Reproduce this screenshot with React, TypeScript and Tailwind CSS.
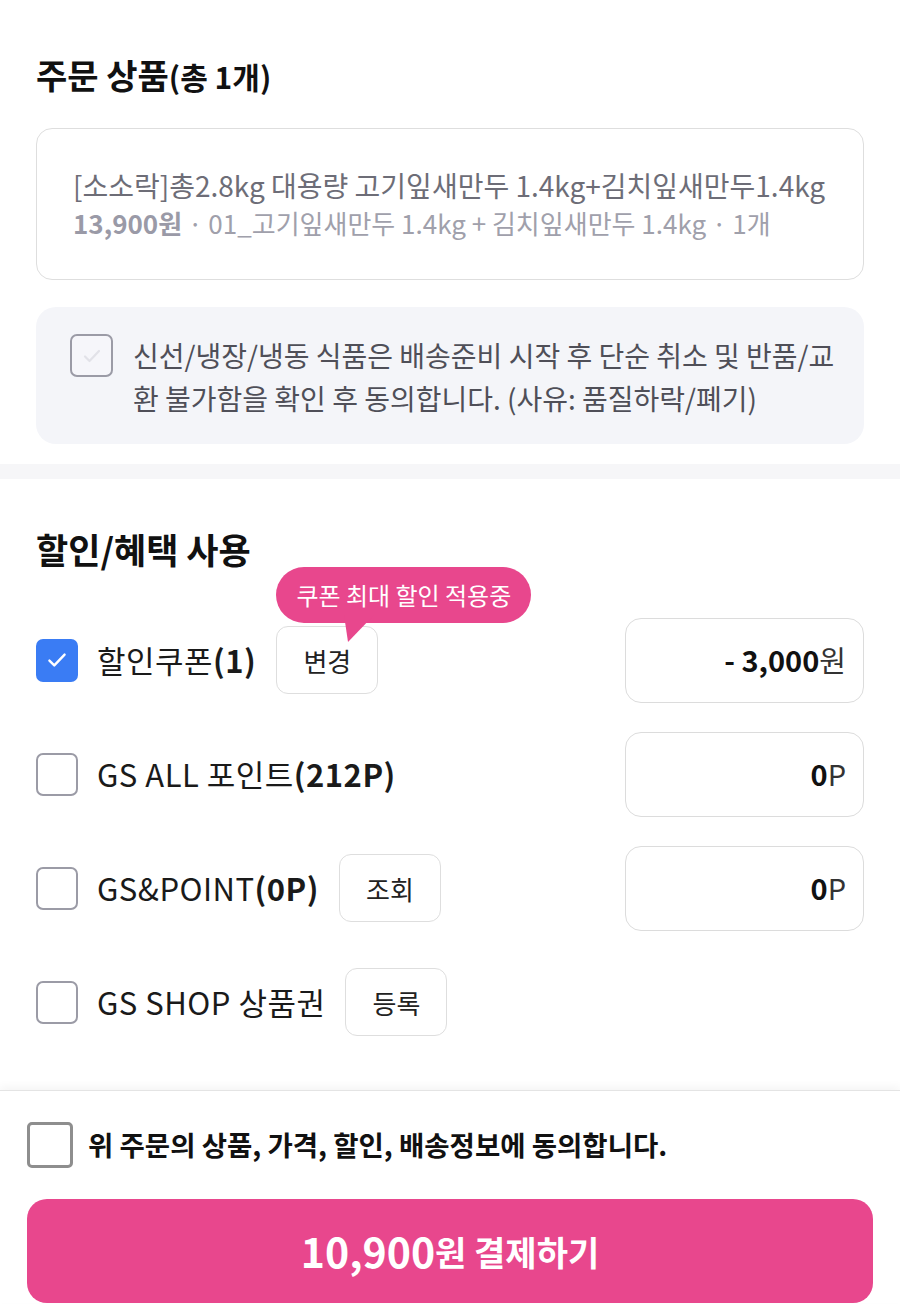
import React from 'react';

const font = 'font-["Noto_Sans_CJK_KR","Noto_Sans",sans-serif]';

function Check({ color = 'white', size = 26 }: { color?: string; size?: number }) {
    return (
        <svg width={size} height={size} viewBox="0 0 24 24" fill="none">
            <path d="M5 12.5l4.5 4.5L19 7" stroke={color} strokeWidth="2.2" strokeLinecap="round" strokeLinejoin="round" />
        </svg>
    );
}

function Box({ checked = false }: { checked?: boolean }) {
    if (checked) {
        return (
            <div className="w-[42px] h-[43px] shrink-0 rounded-[7px] bg-[#3a7cf4] flex items-center justify-center">
                <Check />
            </div>
        );
    }
    return <div className="w-[42px] h-[43px] shrink-0 rounded-[7px] border-[2.5px] border-[#9b9ba6] bg-white" />;
}

function SmallButton({ children }: { children: React.ReactNode }) {
    return (
        <div className="ml-5 w-[102px] h-[68px] shrink-0 rounded-[12px] border border-[#dedede] bg-white flex items-center justify-center text-[26px] text-[#222]">
            {children}
        </div>
    );
}

function Amount({ value, unit }: { value: string; unit: string }) {
    return (
        <div className="w-[239px] h-[85px] rounded-[16px] border border-[#dcdcdc] flex items-center justify-end pr-[17px] text-[29px] text-[#111]">
            <span className="font-bold">{value}</span>
            <span className="text-[#333]">{unit}</span>
        </div>
    );
}

export default function App() {
    return (
        <div className={`w-[900px] h-[1308px] overflow-hidden bg-white ${font}`}>
            {/* order items */}
            <section className="px-9 pt-[55px] pb-[20px]">
                <h2 className="text-[34px] leading-[40px] font-bold text-[#111]">
                    주문 상품<span className="text-[30px]">(총 1개)</span>
                </h2>

                <div className="mt-[32px] rounded-[16px] border border-[#dedede] px-[36px] py-[37px] leading-[38px] whitespace-nowrap">
                    <p className="text-[28px] text-[#6d6d77]">[소소락]총2.8kg 대용량 고기잎새만두 1.4kg+김치잎새만두1.4kg</p>
                    <p className="text-[26px] text-[#a0a0ab]">
                        <span className="font-bold text-[#9a9aa7]">13,900원</span> · 01_고기잎새만두 1.4kg + 김치잎새만두 1.4kg · 1개
                    </p>
                </div>

                <div className="mt-[27px] rounded-[20px] bg-[#f4f5f9] pl-[34px] pt-[27px] pb-[24px] flex gap-5">
                    <div className="w-[43px] h-[43px] shrink-0 rounded-[7px] border-[2.5px] border-[#9b9ba6] bg-[#f6f6fa] flex items-center justify-center">
                        <Check color="#e2e2e8" size={24} />
                    </div>
                    <p className="w-[712px] break-all text-[28px] leading-[43px] text-[#4f4f58]">
                        신선/냉장/냉동 식품은 배송준비 시작 후 단순 취소 및 반품/교환 불가함을 확인 후 동의합니다. (사유: 품질하락/폐기)
                    </p>
                </div>
            </section>

            <div className="h-[15px] bg-[#f6f6f8]" />

            {/* discounts */}
            <section className="px-9 pt-[50px]">
                <h2 className="text-[35px] leading-[40px] font-bold text-[#111]">할인/혜택 사용</h2>

                <div className="mt-[48px] flex flex-col gap-[28px]">
                    <div className="h-[86px] flex items-center justify-between">
                        <div className="flex items-center">
                            <Box checked />
                            <span className="ml-[19px] text-[31px] tracking-[0.5px] text-[#1a1a1a]">
                                할인쿠폰<span className="font-bold">(1)</span>
                            </span>
                            <div className="relative">
                                <SmallButton>변경</SmallButton>
                                {/* tooltip */}
                                <div className="absolute left-5 bottom-[71px] h-[56px] w-[255px] rounded-full bg-[#e8478d] flex items-center justify-center text-white text-[24px] whitespace-nowrap">
                                    쿠폰 최대 할인 적용중
                                    <svg className="absolute left-[64px] top-[48px]" width="34" height="28" viewBox="0 0 34 28">
                                        <path d="M4 0 L34 0 L8 27 Z" fill="#e8478d" />
                                    </svg>
                                </div>
                            </div>
                        </div>
                        <Amount value="- 3,000" unit="원" />
                    </div>

                    <div className="h-[86px] flex items-center justify-between">
                        <div className="flex items-center">
                            <Box />
                            <span className="ml-[19px] text-[31px] tracking-[0.5px] text-[#1a1a1a]">
                                GS ALL 포인트<span className="font-bold">(212P)</span>
                            </span>
                        </div>
                        <Amount value="0" unit="P" />
                    </div>

                    <div className="h-[86px] flex items-center justify-between">
                        <div className="flex items-center">
                            <Box />
                            <span className="ml-[19px] text-[31px] tracking-[0.5px] text-[#1a1a1a]">
                                GS&amp;POINT<span className="font-bold">(0P)</span>
                            </span>
                            <SmallButton>조회</SmallButton>
                        </div>
                        <Amount value="0" unit="P" />
                    </div>

                    <div className="h-[86px] flex items-center">
                        <Box />
                        <span className="ml-[19px] text-[31px] tracking-[0.5px] text-[#1a1a1a]">GS SHOP 상품권</span>
                        <SmallButton>등록</SmallButton>
                    </div>
                </div>
            </section>

            {/* footer */}
            <footer className="mt-[45px] border-t border-[#e4e4e4] shadow-[0_-4px_8px_rgba(0,0,0,0.04)] px-[27px] pt-[31px]">
                <div className="flex items-center gap-[15px]">
                    <div className="w-[46px] h-[46px] shrink-0 rounded-[5px] border-[3px] border-[#8e8e8e]" />
                    <span className="text-[27.5px] font-semibold text-[#111]">위 주문의 상품, 가격, 할인, 배송정보에 동의합니다.</span>
                </div>
                <button className="mt-[31px] w-full h-[104px] rounded-[20px] bg-[#e8478d] text-white font-bold flex items-center justify-center">
                    <span className="text-[41px]">10,900</span>
                    <span className="text-[34px]">원 결제하기</span>
                </button>
            </footer>
        </div>
    );
}
